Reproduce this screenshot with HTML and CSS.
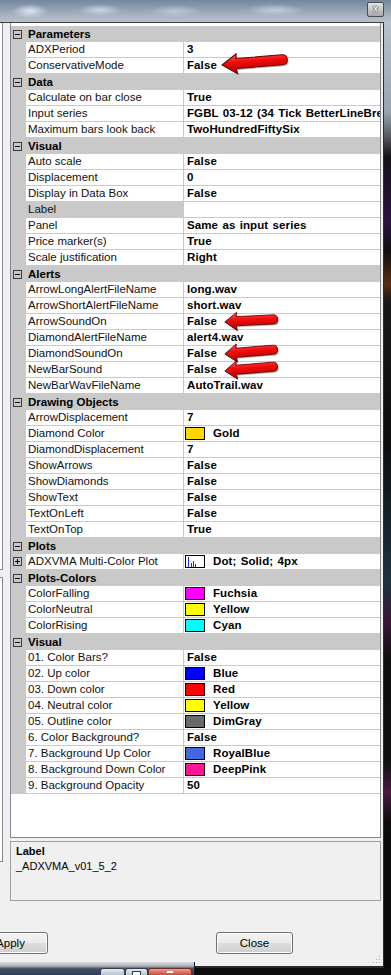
FILE: index.html
```
<!DOCTYPE html>
<html lang="en">
<head>
    <meta charset="UTF-8">
    <title>Indicator properties</title>
    <link rel="stylesheet" href="styles.css">
</head>
<body>
<div class="screen">
    <div class="titlebar"><span class="caption-close">x</span></div>

    <div class="body">
        <div class="dialog">
            <div class="side">
                <div class="list list-top"></div>
                <div class="list list-bottom"></div>
            </div>

            <div class="main">
                <div class="grid">
                    <div class="cat"><span class="glyph"></span>Parameters</div>
                    <div class="row"><span class="gut"></span><span class="name">ADXPeriod</span><span class="val">3</span></div>
                    <div class="row"><span class="gut"></span><span class="name">ConservativeMode</span><span class="val">False</span></div>

                    <div class="cat"><span class="glyph"></span>Data</div>
                    <div class="row"><span class="gut"></span><span class="name">Calculate on bar close</span><span class="val">True</span></div>
                    <div class="row"><span class="gut"></span><span class="name">Input series</span><span class="val">FGBL 03-12 (34 Tick BetterLineBreak)</span></div>
                    <div class="row"><span class="gut"></span><span class="name">Maximum bars look back</span><span class="val">TwoHundredFiftySix</span></div>

                    <div class="cat"><span class="glyph"></span>Visual</div>
                    <div class="row"><span class="gut"></span><span class="name">Auto scale</span><span class="val">False</span></div>
                    <div class="row"><span class="gut"></span><span class="name">Displacement</span><span class="val">0</span></div>
                    <div class="row"><span class="gut"></span><span class="name">Display in Data Box</span><span class="val">False</span></div>
                    <div class="row selected"><span class="gut"></span><span class="name">Label</span><span class="val"></span></div>
                    <div class="row"><span class="gut"></span><span class="name">Panel</span><span class="val">Same as input series</span></div>
                    <div class="row"><span class="gut"></span><span class="name">Price marker(s)</span><span class="val">True</span></div>
                    <div class="row"><span class="gut"></span><span class="name">Scale justification</span><span class="val">Right</span></div>

                    <div class="cat"><span class="glyph"></span>Alerts</div>
                    <div class="row"><span class="gut"></span><span class="name">ArrowLongAlertFileName</span><span class="val">long.wav</span></div>
                    <div class="row"><span class="gut"></span><span class="name">ArrowShortAlertFileName</span><span class="val">short.wav</span></div>
                    <div class="row"><span class="gut"></span><span class="name">ArrowSoundOn</span><span class="val">False</span></div>
                    <div class="row"><span class="gut"></span><span class="name">DiamondAlertFileName</span><span class="val">alert4.wav</span></div>
                    <div class="row"><span class="gut"></span><span class="name">DiamondSoundOn</span><span class="val">False</span></div>
                    <div class="row"><span class="gut"></span><span class="name">NewBarSound</span><span class="val">False</span></div>
                    <div class="row"><span class="gut"></span><span class="name">NewBarWavFileName</span><span class="val">AutoTrail.wav</span></div>

                    <div class="cat"><span class="glyph"></span>Drawing Objects</div>
                    <div class="row"><span class="gut"></span><span class="name">ArrowDisplacement</span><span class="val">7</span></div>
                    <div class="row"><span class="gut"></span><span class="name">Diamond Color</span><span class="val"><i class="swatch gold"></i>Gold</span></div>
                    <div class="row"><span class="gut"></span><span class="name">DiamondDisplacement</span><span class="val">7</span></div>
                    <div class="row"><span class="gut"></span><span class="name">ShowArrows</span><span class="val">False</span></div>
                    <div class="row"><span class="gut"></span><span class="name">ShowDiamonds</span><span class="val">False</span></div>
                    <div class="row"><span class="gut"></span><span class="name">ShowText</span><span class="val">False</span></div>
                    <div class="row"><span class="gut"></span><span class="name">TextOnLeft</span><span class="val">False</span></div>
                    <div class="row"><span class="gut"></span><span class="name">TextOnTop</span><span class="val">True</span></div>

                    <div class="cat"><span class="glyph"></span>Plots</div>
                    <div class="row"><span class="gut"><span class="glyph plus"></span></span><span class="name">ADXVMA Multi-Color Plot</span><span class="val"><svg class="plot-icon" width="20" height="13" viewBox="0 0 20 13"><rect x="0.5" y="0.5" width="19" height="12" fill="#fff" stroke="#000"/><path d="M3.5 12V2M6.5 12V8M8.5 12V6M10.5 12V9" stroke="#1a2ee0" stroke-width="1"/></svg>Dot; Solid; 4px</span></div>

                    <div class="cat"><span class="glyph"></span>Plots-Colors</div>
                    <div class="row"><span class="gut"></span><span class="name">ColorFalling</span><span class="val"><i class="swatch fuchsia"></i>Fuchsia</span></div>
                    <div class="row"><span class="gut"></span><span class="name">ColorNeutral</span><span class="val"><i class="swatch yellow"></i>Yellow</span></div>
                    <div class="row"><span class="gut"></span><span class="name">ColorRising</span><span class="val"><i class="swatch cyan"></i>Cyan</span></div>

                    <div class="cat"><span class="glyph"></span>Visual</div>
                    <div class="row"><span class="gut"></span><span class="name">01. Color Bars?</span><span class="val">False</span></div>
                    <div class="row"><span class="gut"></span><span class="name">02. Up color</span><span class="val"><i class="swatch blue"></i>Blue</span></div>
                    <div class="row"><span class="gut"></span><span class="name">03. Down color</span><span class="val"><i class="swatch red"></i>Red</span></div>
                    <div class="row"><span class="gut"></span><span class="name">04. Neutral color</span><span class="val"><i class="swatch yellow"></i>Yellow</span></div>
                    <div class="row"><span class="gut"></span><span class="name">05. Outline color</span><span class="val"><i class="swatch dimgray"></i>DimGray</span></div>
                    <div class="row"><span class="gut"></span><span class="name">6. Color Background?</span><span class="val">False</span></div>
                    <div class="row"><span class="gut"></span><span class="name">7. Background Up Color</span><span class="val"><i class="swatch royalblue"></i>RoyalBlue</span></div>
                    <div class="row"><span class="gut"></span><span class="name">8. Background Down Color</span><span class="val"><i class="swatch deeppink"></i>DeepPink</span></div>
                    <div class="row"><span class="gut"></span><span class="name">9. Background Opacity</span><span class="val">50</span></div>
                </div>

                <div class="help">
                    <b>Label</b>
                    <span>_ADXVMA_v01_5_2</span>
                </div>

                <div class="buttons">
                    <button class="btn btn-apply">Apply</button>
                    <button class="btn btn-close">Close</button>
                </div>

                <div class="grip">
                    <svg width="8" height="8" viewBox="0 0 8 8">
                        <g fill="#fff"><rect x="7" y="1" width="1" height="1"/><rect x="4" y="4" width="1" height="1"/><rect x="7" y="4" width="1" height="1"/><rect x="1" y="7" width="1" height="1"/><rect x="4" y="7" width="1" height="1"/><rect x="7" y="7" width="1" height="1"/></g>
                        <g fill="#a8a8a8"><rect x="6" y="0" width="1" height="1"/><rect x="3" y="3" width="1" height="1"/><rect x="6" y="3" width="1" height="1"/><rect x="0" y="6" width="1" height="1"/><rect x="3" y="6" width="1" height="1"/><rect x="6" y="6" width="1" height="1"/></g>
                    </svg>
                </div>
            </div>
        </div>
        <div class="outside"></div>
    </div>
    <div class="bottom"></div>

    <!-- window peeking in at the bottom left -->
    <div class="behind">
        <span class="cb cb-min"></span>
        <span class="cb cb-max"><i></i></span>
        <span class="cb cb-close"></span>
    </div>

    <!-- red callout arrows -->
    <svg class="arrow arrow-1" viewBox="0 0 68 22" preserveAspectRatio="none">
        <defs>
            <linearGradient id="redfill" x1="0" y1="0" x2="0" y2="1">
                <stop offset="0" stop-color="#ff6060"/>
                <stop offset="0.4" stop-color="#f20c0c"/>
                <stop offset="1" stop-color="#b00000"/>
            </linearGradient>
        </defs>
        <path d="M2.5 12.5 L17 2 L16 7 L62 6.5 Q67.5 6.5 67.5 11.5 Q67.5 16.5 62 16.5 L16 17 L17 22 Z" fill="rgba(40,0,0,0.35)"/>
        <path d="M1 11 L16 0.8 L15 5.5 L61 5 Q66.5 5 66.5 10 Q66.5 15 61 15 L15 15.5 L16 20.8 Z" fill="url(#redfill)" stroke="#6a0000" stroke-width="1"/>
    </svg>
    <svg class="arrow arrow-2" viewBox="0 0 68 22" preserveAspectRatio="none">
        <path d="M2.5 12.5 L17 2 L16 7 L62 6.5 Q67.5 6.5 67.5 11.5 Q67.5 16.5 62 16.5 L16 17 L17 22 Z" fill="rgba(40,0,0,0.35)"/>
        <path d="M1 11 L16 0.8 L15 5.5 L61 5 Q66.5 5 66.5 10 Q66.5 15 61 15 L15 15.5 L16 20.8 Z" fill="url(#redfill)" stroke="#6a0000" stroke-width="1"/>
    </svg>
    <svg class="arrow arrow-3" viewBox="0 0 68 22" preserveAspectRatio="none">
        <path d="M2.5 12.5 L17 2 L16 7 L62 6.5 Q67.5 6.5 67.5 11.5 Q67.5 16.5 62 16.5 L16 17 L17 22 Z" fill="rgba(40,0,0,0.35)"/>
        <path d="M1 11 L16 0.8 L15 5.5 L61 5 Q66.5 5 66.5 10 Q66.5 15 61 15 L15 15.5 L16 20.8 Z" fill="url(#redfill)" stroke="#6a0000" stroke-width="1"/>
    </svg>
    <svg class="arrow arrow-4" viewBox="0 0 68 22" preserveAspectRatio="none">
        <path d="M2.5 12.5 L17 2 L16 7 L62 6.5 Q67.5 6.5 67.5 11.5 Q67.5 16.5 62 16.5 L16 17 L17 22 Z" fill="rgba(40,0,0,0.35)"/>
        <path d="M1 11 L16 0.8 L15 5.5 L61 5 Q66.5 5 66.5 10 Q66.5 15 61 15 L15 15.5 L16 20.8 Z" fill="url(#redfill)" stroke="#6a0000" stroke-width="1"/>
    </svg>
</div>
</body>
</html>
```

FILE: styles.css
```
body {
    margin: 0;
    background: #000;
    font-family: "Liberation Sans", Arial, sans-serif;
    font-size: 11px;
    color: #000;
}
.screen {
    position: relative;
    width: 391px;
    height: 975px;
    overflow: hidden;
    display: flex;
    flex-direction: column;
}

/* blurred caption of the dialog */
.titlebar {
    height: 22px;
    flex: none;
    display: flex;
    justify-content: flex-end;
    align-items: flex-start;
    background:
        radial-gradient(ellipse 18px 7px at 30px 11px, rgba(235,242,250,0.85), rgba(235,242,250,0)),
        radial-gradient(ellipse 22px 6px at 100px 10px, rgba(225,235,245,0.7), rgba(225,235,245,0)),
        radial-gradient(ellipse 26px 6px at 175px 11px, rgba(215,228,240,0.55), rgba(215,228,240,0)),
        radial-gradient(ellipse 30px 6px at 275px 10px, rgba(220,232,244,0.6), rgba(220,232,244,0)),
        linear-gradient(#75879c 0, #8d9db0 8px, #aab6c3 16px, #b7c1cc 22px);
}
.caption-close {
    width: 15px;
    height: 13px;
    margin: 2px 7px 0 0;
    border: 1px solid #4d4d4d;
    border-radius: 2px;
    background: linear-gradient(#e4e4e4, #a9a9a9);
    color: #fff;
    font-weight: bold;
    font-size: 10px;
    line-height: 12px;
    text-align: center;
    text-shadow: 0 0 1px #000, 0 0 1px #000;
}

.body {
    display: flex;
    flex: none;
    height: 946px;
}
.dialog {
    width: 384px;
    height: 946px;
    box-sizing: border-box;
    display: flex;
    padding-right: 2px;
    background: #f0f0f0;
    border-top: 1px solid #3f3f3f;
    border-right: 1px solid #2d2d2d;
    border-bottom: 2px solid #2a2a2a;
}
.outside {
    width: 7px;
    background: linear-gradient(#b9c2cb 0, #98a3ae 90px, #55585e 115px, #151218 135px,
        #2b1440 200px, #101010 230px, #5a2d10 262px, #181818 280px, #0d0d0d 420px,
        #1d3340 560px, #3a1636 600px, #0e0e0e 640px, #111 740px, #4a1a42 770px, #0c0c0c 800px, #0a0a0a 100%);
}
.bottom {
    flex: none;
    height: 7px;
    background: #0c0c0c;
}

/* cut-off list panels on the left */
.side {
    width: 10px;
    flex: none;
}
.list {
    width: 3px;
    box-sizing: border-box;
    background: #fff;
    border: 1px solid #828790;
    border-left: none;
}
.list-top {
    height: 547px;
    border-top: none;
}
.list-bottom {
    height: 285px;
    margin-top: 7px;
}

.main {
    width: 371px;
    flex: none;
    display: flex;
    flex-direction: column;
}

/* property grid */
.grid {
    height: 815px;
    box-sizing: border-box;
    padding-top: 3px;
    background: #fff;
    border: 1px solid #828790;
    border-top: none;
    overflow: hidden;
    font-size: 11.5px;
}
.cat {
    height: 16px;
    display: flex;
    align-items: center;
    background: #c9c9c9;
    font-weight: bold;
    line-height: 16px;
}
.glyph {
    position: relative;
    width: 9px;
    height: 9px;
    box-sizing: border-box;
    border: 1px solid #3c3c3c;
    margin: 0 6px 0 2px;
    flex: none;
}
.glyph::before {
    content: "";
    position: absolute;
    left: 1px;
    top: 3px;
    width: 5px;
    height: 1px;
    background: #000;
}
.glyph.plus::after {
    content: "";
    position: absolute;
    left: 3px;
    top: 1px;
    width: 1px;
    height: 5px;
    background: #000;
}
.row {
    display: grid;
    grid-template-columns: 15px 158px 196px;
    height: 16px;
    line-height: 15px;
}
.gut {
    background: #c9c9c9;
    display: flex;
    align-items: flex-start;
}
.gut .glyph {
    margin-top: 3px;
}
.name, .val {
    background: #fff;
    border-bottom: 1px solid #c9c9c9;
    white-space: nowrap;
    overflow: hidden;
}
.name {
    padding-left: 2px;
    border-right: 1px solid #c9c9c9;
    color: #111;
}
.selected .name {
    background: #c9c9c9;
}
.val {
    padding-left: 3px;
    font-weight: bold;
    letter-spacing: 0.1px;
    word-spacing: 1px;
    display: flex;
    align-items: flex-start;
}
.swatch, .plot-icon {
    flex: none;
    width: 20px;
    height: 13px;
    box-sizing: border-box;
    margin: 1px 8px 0 -2px;
}
.swatch {
    border: 1px solid #000;
}
.gold { background: #ffd700; }
.fuchsia { background: #ff00ff; }
.yellow { background: #ffff00; }
.cyan { background: #00ffff; }
.blue { background: #0000ff; }
.red { background: #ff0000; }
.dimgray { background: #696969; }
.royalblue { background: #4169e1; }
.deeppink { background: #ff1493; }

/* description pane */
.help {
    margin-top: 3px;
    height: 60px;
    box-sizing: border-box;
    border: 1px solid #a0a0a0;
    padding: 2px 5px;
    display: flex;
    flex-direction: column;
    line-height: 15px;
}

.buttons {
    margin-top: 31px;
    height: 22px;
    display: flex;
}
.btn {
    height: 22px;
    padding: 0;
    border: 1px solid #707070;
    border-radius: 3px;
    background: linear-gradient(#f2f2f2 0%, #ebebeb 50%, #dddddd 51%, #cfcfcf 100%);
    box-shadow: inset 0 0 0 1px #fbfbfb;
    font-family: "Liberation Sans", Arial, sans-serif;
    font-size: 11.5px;
    color: #000;
}
.btn-apply {
    width: 75px;
    margin-left: -37px;
}
.btn-close {
    width: 77px;
    margin-left: 168px;
}
.grip {
    display: flex;
    justify-content: flex-end;
    margin-top: 2px;
    height: 8px;
}

/* window behind, peeking in at the bottom */
.behind {
    position: absolute;
    left: 0;
    top: 962px;
    width: 195px;
    height: 13px;
    box-sizing: border-box;
    padding: 6px 0 0 100px;
    display: flex;
    border-right: 1px solid #1c1c1c;
    background: linear-gradient(#d9dcdf 0, #aeb3b8 4px, #59677a 6px, #3d4f66 7px, #2f4057 100%);
}
.cb {
    height: 7px;
    box-sizing: border-box;
    border: 1px solid #34404e;
    border-bottom: none;
    border-radius: 3px 3px 0 0;
    background: linear-gradient(#e6ebf0, #b8c3ce);
}
.cb-min {
    width: 25px;
}
.cb-max {
    width: 23px;
    display: flex;
    justify-content: center;
}
.cb-max i {
    width: 9px;
    height: 5px;
    margin-top: 2px;
    border: 1px solid #2c3846;
    border-bottom: none;
    box-sizing: border-box;
    background: #fff;
}
.cb-close {
    position: relative;
    width: 44px;
    background: linear-gradient(#e8a196, #c9483c);
    border-color: #6b2a24;
}
.cb-close::before,
.cb-close::after {
    content: "";
    position: absolute;
    left: 19px;
    top: 2px;
    width: 5px;
    height: 2px;
    background: #fff;
    transform: skewX(40deg);
}
.cb-close::after {
    left: 18px;
    transform: skewX(-40deg);
}

/* callout arrows */
.arrow {
    position: absolute;
    transform-origin: 1px 50%;
}
.arrow-1 {
    left: 221px;
    top: 54px;
    width: 68px;
    height: 22px;
    transform: rotate(-4deg);
}
.arrow-2 {
    left: 224px;
    top: 312px;
    width: 55px;
    height: 20px;
    transform: rotate(-2deg);
}
.arrow-3 {
    left: 224px;
    top: 344px;
    width: 55px;
    height: 20px;
    transform: rotate(-4deg);
}
.arrow-4 {
    left: 224px;
    top: 361px;
    width: 55px;
    height: 20px;
    transform: rotate(-4deg);
}
```
